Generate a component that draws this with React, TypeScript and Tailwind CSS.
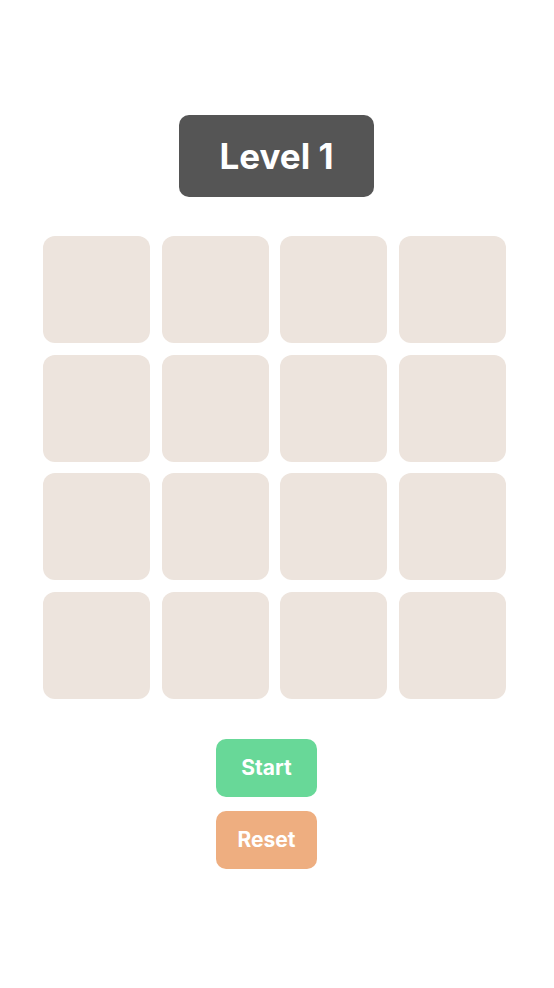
export default function App() {
  const tiles = Array.from({ length: 16 }, (_, i) => i);

  return (
    <div className="min-h-screen bg-white flex flex-col items-center pt-[115px] font-['Inter','Liberation_Sans',sans-serif]">
      <div className="h-[82px] w-[195px] ml-[-1px] rounded-[10px] bg-[#555555] flex items-center justify-center">
        <span className="text-[35px] font-bold text-white leading-none">Level 1</span>
      </div>

      <div className="mt-[39px] ml-[-5px] grid grid-cols-4 gap-[11.67px] w-[463px]">
        {tiles.map((t) => (
          <div key={t} className="h-[107px] w-[107px] rounded-[12px] bg-[#ede4dd]" />
        ))}
      </div>

      <div className="mt-[40px] mr-[21px] flex flex-col gap-[14px]">
        <button className="h-[58px] w-[101px] rounded-[10px] bg-[#68d898] text-white text-[21px] font-bold">
          Start
        </button>
        <button className="h-[58px] w-[101px] rounded-[10px] bg-[#eeae80] text-white text-[21px] font-bold">
          Reset
        </button>
      </div>
    </div>
  );
}
